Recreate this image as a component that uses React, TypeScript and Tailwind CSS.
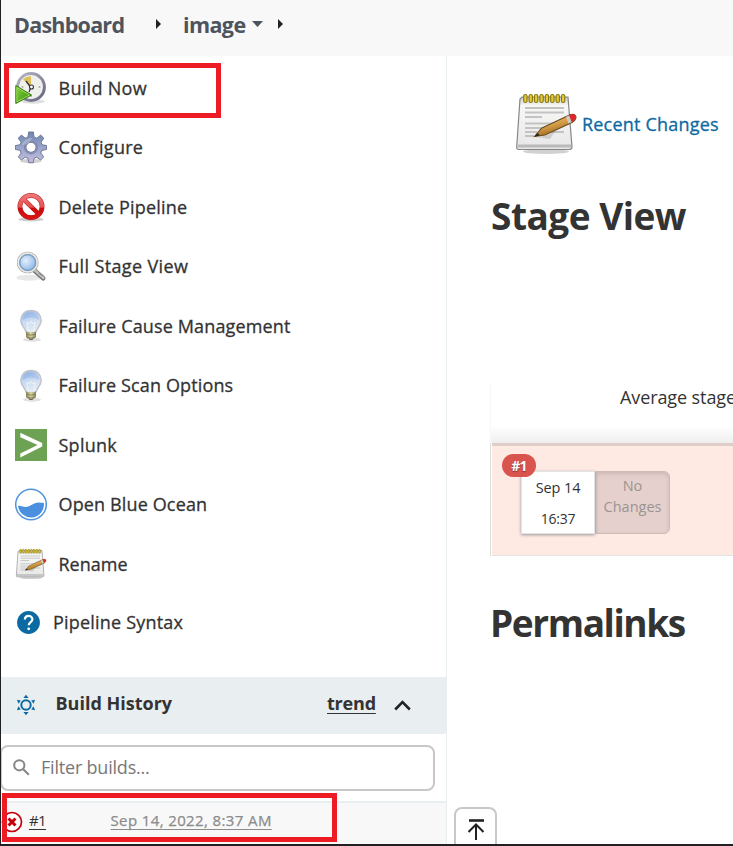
import React from "react";

function BuildNowIcon() {
  return (
    <svg width="32" height="34" viewBox="0 0 32 34">
      <defs>
        <linearGradient id="clockRim" x1="0" y1="0" x2="1" y2="1"><stop stopColor="#b9bac6" /><stop offset="1" stopColor="#62637f" /></linearGradient>
        <linearGradient id="play" x1="0" y1="0" x2="1" y2="1"><stop stopColor="#8ad63c" /><stop offset="1" stopColor="#2f8a08" /></linearGradient>
      </defs>
      <ellipse cx="18" cy="30.5" rx="12" ry="2.2" fill="#000" opacity=".13" />
      <circle cx="16" cy="16" r="13.4" fill="#efefec" stroke="url(#clockRim)" strokeWidth="3" />
      <path d="M16 16 L8 8.5 A11 11 0 0 1 16 5.2Z" fill="#dfbf57" />
      <path d="M15.5 16 L11 10 M16 16 L14 21" stroke="#333" strokeWidth="1.3" />
      <circle cx="16.5" cy="16" r="2" fill="#fff" stroke="#333" strokeWidth="1.1" />
      <g fill="#aaa"><circle cx="24.5" cy="16" r="1" /><circle cx="16" cy="25" r="1" /><circle cx="7.5" cy="16" r="1" /></g>
      <path d="M.8 14.5 L16.5 24 L.8 32.5Z" fill="url(#play)" stroke="#36770f" strokeWidth="1" />
      <path d="M1.9 16.4 L14.5 24 L1.9 30.8Z" fill="none" stroke="#a8e070" strokeWidth=".8" />
    </svg>
  );
}

function GearIcon() {
  return (
    <svg width="32" height="33" viewBox="0 0 32 33">
      <defs><linearGradient id="gear" x1="0" y1="0" x2="0" y2="1"><stop stopColor="#6d86b0" /><stop offset=".5" stopColor="#9aa4cb" /><stop offset="1" stopColor="#c5bfdf" /></linearGradient></defs>
      <ellipse cx="16" cy="30" rx="11" ry="2.2" fill="#000" opacity=".18" />
      <g fill="url(#gear)" stroke="#65708f" strokeWidth=".9" strokeLinejoin="round">
        <path fillRule="evenodd" d="M13.6 1 h4.8 l.6 5 l2.8 1.2 l3.9 -3.1 l3.1 3.1 l-2.8 4 l1 2.6 l4.6 .7 v4 l-4.6 .8 l-1.2 2.8 l2.9 3.8 l-3.1 3.1 l-3.9 -2.8 l-2.7 1.1 l-.7 4.4 h-4.5 l-.8 -4.4 l-2.7 -1.1 l-3.9 2.8 l-3.1 -3.1 l2.8 -3.8 l-1.1 -2.8 l-4.6 -.8 v-4 l4.6 -.7 l1.1 -2.6 l-2.8 -4 l3.1 -3.1 l3.9 3.1 l2.7 -1.2z M16 11.3 a5 5 0 1 0 0 10 a5 5 0 1 0 0 -10z" />
      </g>
      <circle cx="16" cy="16.3" r="6.4" fill="none" stroke="#8189ae" strokeWidth="1.4" />
      <path d="M6.8 14 Q10 6.5 17 7 Q15 14 6.8 14Z" fill="#fff" opacity=".25" />
    </svg>
  );
}

function ForbiddenIcon() {
  return (
    <svg width="32" height="32" viewBox="0 0 32 32">
      <defs><linearGradient id="stop" gradientUnits="userSpaceOnUse" x1="0" y1="3" x2="0" y2="29"><stop stopColor="#ee7b7b" /><stop offset=".5" stopColor="#e65050" /><stop offset=".56" stopColor="#cf0808" /><stop offset="1" stopColor="#dc1616" /></linearGradient></defs>
      <ellipse cx="16" cy="28.4" rx="12.5" ry="2" fill="#000" opacity=".2" />
      <circle cx="16" cy="15.5" r="11.1" fill="none" stroke="#b51b1b" strokeWidth="4.8" />
      <path d="M8.2 7.8 L23.8 23.2" stroke="#b51b1b" strokeWidth="4.5" />
      <circle cx="16" cy="15.5" r="11.1" fill="none" stroke="url(#stop)" strokeWidth="3.8" />
      <path d="M8.2 7.8 L23.8 23.2" stroke="url(#stop)" strokeWidth="3.5" />
    </svg>
  );
}

function MagnifierIcon() {
  return (
    <svg width="32" height="32" viewBox="0 0 32 32">
      <defs><radialGradient id="lens" cx=".4" cy=".4"><stop stopColor="#e2effc" /><stop offset="1" stopColor="#9abfeb" /></radialGradient></defs>
      <ellipse cx="14" cy="26.7" rx="12.5" ry="3" fill="#000" opacity=".09" />
      <path d="M19.5 19.5 L28.2 27.3" stroke="#747474" strokeWidth="4.6" strokeLinecap="round" />
      <path d="M19.5 19 L28.4 27" stroke="#c0c0bd" strokeWidth="2.4" strokeLinecap="round" />
      <path d="M24 21.7 L27.8 25" stroke="#888" strokeWidth="1.3" />
      <circle cx="12.7" cy="11.5" r="9.4" fill="url(#lens)" stroke="#a8aaa8" strokeWidth="2.8" />
      <circle cx="12.7" cy="11.5" r="9.5" fill="none" stroke="#eeeeec" strokeWidth="1.4" />
      <circle cx="12.7" cy="11.5" r="7.7" fill="none" stroke="#6d97c8" strokeWidth="1" />
    </svg>
  );
}

function BulbIcon() {
  return (
    <svg width="32" height="34" viewBox="0 0 32 34">
      <defs>
        <linearGradient id="bulb" x1="0" y1="0" x2=".35" y2="1"><stop stopColor="#8baee0" /><stop offset=".45" stopColor="#c5d8f2" /><stop offset="1" stopColor="#e5ebf2" /></linearGradient>
        <linearGradient id="base" x1="0" y1="0" x2="1" y2="0"><stop stopColor="#8b8857" /><stop offset=".5" stopColor="#dcdaa5" /><stop offset="1" stopColor="#84815a" /></linearGradient>
      </defs>
      <ellipse cx="17" cy="30.7" rx="9" ry="2" fill="#000" opacity=".12" />
      <path d="M16 1.5 C9.5 1.5 5.8 6 5.8 11.5 C5.8 16 9.6 18.3 11 23 Q16 25 21 23 C22.4 18.3 26.2 16 26.2 11.5 C26.2 6 22.5 1.5 16 1.5Z" fill="url(#bulb)" stroke="#c1c4c9" strokeWidth="1.5" />
      <path d="M16 3.3 C11 3.3 7.8 6.6 7.8 11 Q16 6.5 24.2 11 C24.2 6.6 21 3.3 16 3.3Z" fill="#82a7df" opacity=".35" />
      <path d="M13.3 22.5 L12 13 L14.5 15 L16 12 L18 15 L20 13 L18.7 22.5" fill="none" stroke="#f6f8fa" strokeWidth="1" opacity=".75" />
      <path d="M11 22.5 Q16 24.5 21 22.5 V27.5 Q19.5 30.5 16 30.5 Q12.5 30.5 11 27.5Z" fill="url(#base)" />
      <path d="M11 25.3 Q16 27 21 25.3 M11.3 28 Q16 29.8 20.7 28" fill="none" stroke="#77744b" strokeWidth=".8" />
      <path d="M13.5 29 Q16 30.5 18.5 29 L17.5 31 H14.5Z" fill="#68685a" />
    </svg>
  );
}

function SplunkIcon() {
  return (
    <svg width="32" height="32" viewBox="0 0 32 32">
      <path fill="#6da153" d="M0 0H32V32H0Z" />
      <path fill="#fff" d="M5.3 3.8 L27.2 14.1 V17.6 L5.3 28.5 V24.5 L22.6 16 L5.3 8.2Z" />
    </svg>
  );
}

function OceanIcon() {
  return (
    <svg width="32" height="33" viewBox="0 0 32 33">
      <circle cx="16" cy="16.5" r="15.3" fill="#fff" stroke="#4d94df" strokeWidth="1.5" />
      <path d="M3 17.8 C7 17 9 20.3 14 18.3 C20 14.5 22.5 13.6 28.9 15.1 A13 13 0 0 1 3 17.8Z" fill="#4a90df" />
    </svg>
  );
}

function NotepadIcon({ size = 32 }: { size?: number }) {
  return (
    <svg width={size} height={size} viewBox="0 0 64 64">
      <defs>
        <linearGradient id="paper" x1="0" y1="0" x2="0" y2="1"><stop stopColor="#c7c7c7" /><stop offset=".16" stopColor="#f7f7f6" /><stop offset="1" stopColor="#e7e7e7" /></linearGradient>
        <linearGradient id="pencil" x1="0" y1="0" x2=".5" y2="1"><stop stopColor="#f2cb79" /><stop offset=".55" stopColor="#d69f4a" /><stop offset="1" stopColor="#8f5d14" /></linearGradient>
      </defs>
      <ellipse cx="32" cy="59.5" rx="23" ry="2.5" fill="#000" opacity=".18" />
      <path d="M8 5 H54 L58 55 Q58 57.5 55 57.5 H5 Q2.5 57.5 2.7 55 L6 7Z" fill="url(#paper)" stroke="#868686" strokeWidth="1.2" />
      <path d="M4 52.5 H57 V55.5 H4Z" fill="#b9bab9" />
      <g stroke="#c3c3c3" strokeWidth="1.8"><path d="M11 16H50M11 20.5H50M11 25H28M11 31.5H44M11 36H37M11 40H23M34 40H50M11 44H20" /></g>
      <g fill="#e5cc31" stroke="#887612" strokeWidth="1.1">
        <rect x="9.7" y="2.5" width="3.3" height="8" rx="1.6" /><rect x="15.1" y="2.5" width="3.3" height="8" rx="1.6" /><rect x="20.5" y="2.5" width="3.3" height="8" rx="1.6" /><rect x="25.9" y="2.5" width="3.3" height="8" rx="1.6" /><rect x="31.3" y="2.5" width="3.3" height="8" rx="1.6" /><rect x="36.7" y="2.5" width="3.3" height="8" rx="1.6" /><rect x="42.1" y="2.5" width="3.3" height="8" rx="1.6" /><rect x="47.5" y="2.5" width="3.3" height="8" rx="1.6" />
      </g>
      <path d="M21 45 Q34 45 42 38 L36 47Z" fill="#000" opacity=".13" />
      <path d="M20.5 44.5 L27.5 36.2 L56 22.8 Q61 21 62 25 Q62 28 58 30.5 L31 43Z" fill="url(#pencil)" stroke="#6a4c20" strokeWidth="1.1" />
      <path d="M55 23.4 L57 22.4 Q61 21.2 61.7 25 Q61.5 28 57.5 30.2Z" fill="#df282d" />
      <path d="M52 24.8 L55 23.4 L57.5 30.2 L54.5 31.6Z" fill="#ccc" />
      <path d="M20.5 44.5 L23.5 41 L26 43.6Z" fill="#282719" />
    </svg>
  );
}

function SunIcon() {
  return (
    <svg width="20" height="22" viewBox="0 0 20 22" fill="#0b6aa2">
      <circle cx="10" cy="11" r="4.7" fill="none" stroke="#0b6aa2" strokeWidth="2" />
      <path d="M10 .8 L12.6 3.9H7.4Z M10 21.2 L12.6 18.1H7.4Z M.9 5.8 L4.8 6.4 L2.5 9.8Z M19.1 5.8 L15.2 6.4 L17.5 9.8Z M.9 16.2 L4.8 15.6 L2.5 12.2Z M19.1 16.2 L15.2 15.6 L17.5 12.2Z" />
    </svg>
  );
}

const tasks = [
  { label: "Build Now", icon: <BuildNowIcon />, tracking: "tracking-[0.3px]" },
  { label: "Configure", icon: <GearIcon />, tracking: "tracking-[0.3px]" },
  { label: "Delete Pipeline", icon: <ForbiddenIcon />, tracking: "tracking-[0.2px]" },
  { label: "Full Stage View", icon: <MagnifierIcon />, tracking: "tracking-[0.37px]" },
  { label: "Failure Cause Management", icon: <BulbIcon />, tracking: "tracking-[0.14px]" },
  { label: "Failure Scan Options", icon: <BulbIcon />, tracking: "tracking-[0.13px]" },
  { label: "Splunk", icon: <SplunkIcon />, tracking: "tracking-[0.25px]" },
  { label: "Open Blue Ocean", icon: <OceanIcon />, tracking: "tracking-[0.14px]" },
  { label: "Rename", icon: <NotepadIcon />, tracking: "tracking-normal" },
];

function Header() {
  return (
    <header className="flex h-14 shrink-0 items-center bg-[#f8f8f8] pb-1.5 pl-[13px] text-[21.5px] font-bold text-[#4d545d]">
      <span className="w-[142px] tracking-[-0.75px]">Dashboard</span>
      <svg className="mb-0.5" width="5" height="10" viewBox="0 0 5 10"><path d="M0 0 L5 5 L0 10Z" fill="#222" /></svg>
      <span className="ml-[22px] w-[69px] tracking-[-0.6px]">image</span>
      <svg className="mb-0.5" width="11" height="6" viewBox="0 0 11 6"><path d="M0 0H11L5.5 6Z" fill="#4d545d" /></svg>
      <svg className="mb-0.5 ml-[15px]" width="5" height="10" viewBox="0 0 5 10"><path d="M0 0 L5 5 L0 10Z" fill="#222" /></svg>
    </header>
  );
}

function Sidebar() {
  return (
    <aside className="flex w-[446px] shrink-0 flex-col border-r border-[#e9eef1]">
      <nav className="flex h-[621px] shrink-0 flex-col pt-[2.5px] text-[18px] font-medium [-webkit-text-stroke:0.3px]">
        {tasks.map((t) => (
          <a key={t.label} className="flex h-[59.5px] shrink-0 items-center pl-[14px]">
            <span className="flex w-[43.5px] shrink-0">{t.icon}</span>
            <span className={t.tracking}>{t.label}</span>
          </a>
        ))}
        <a className="flex h-[57px] items-center pl-4">
          <svg width="23" height="23" viewBox="0 0 23 23"><circle cx="11.5" cy="11.5" r="11.4" fill="#0b6aa2" /><path d="M7.9 8.6 C7.9 3.7 15.4 3.9 15.4 8.2 C15.4 11.2 11.7 11 11.7 14.3" fill="none" stroke="#fff" strokeWidth="2.2" /><circle cx="11.7" cy="17.8" r="1.4" fill="#fff" /></svg>
          <span className="ml-[13px] tracking-[0.2px]">Pipeline Syntax</span>
        </a>
      </nav>
      <div className="flex h-[57px] shrink-0 items-center bg-[#e9eef1] pb-1 pl-[15px] text-[18px] font-bold">
        <span className="mt-[3px] w-[39.5px]"><SunIcon /></span>
        <span className="w-[271.5px]">Build History</span>
        <span className="w-[67px] tracking-[-0.2px] underline decoration-1 underline-offset-[3px]">trend</span>
        <svg className="mt-1" width="17" height="11" viewBox="0 0 17 11"><path d="M1.2 9.5 L8.5 2.2 L15.8 9.5" fill="none" stroke="#222" strokeWidth="2.6" /></svg>
      </div>
      <div className="mt-[11px] -ml-px flex h-[46px] w-[435px] shrink-0 items-center rounded-lg border-2 border-[#c8c8c8] pb-0.5 pl-[11px] text-[18px] text-[#777]">
        <svg width="17" height="17" viewBox="0 0 17 17" fill="none" stroke="#858585" strokeWidth="2"><circle cx="6.3" cy="6.3" r="5.1" /><path d="M10 10 L15.8 15.8" /></svg>
        <span className="ml-[11px] tracking-[-0.2px]">Filter builds...</span>
      </div>
      <div className="mt-[10px] flex flex-1 items-center border-t-2 border-[#e9eef1] bg-[#f8f8f8] pb-1.5 text-[15px]">
        <svg className="mt-[3px]" width="22" height="22" viewBox="0 0 22 22"><circle cx="11" cy="11" r="9.5" fill="#fff" stroke="#c4000a" strokeWidth="1.7" /><path d="M7.5 7.5 L14.5 14.5 M14.5 7.5 L7.5 14.5" stroke="#c4000a" strokeWidth="3" /></svg>
        <span className="ml-[6px] w-[81.5px] tracking-[-0.6px] underline decoration-1 underline-offset-[3px]">#1</span>
        <span className="font-medium tracking-[0.38px] text-[#8b8b8b] underline decoration-1 underline-offset-[3px] [-webkit-text-stroke:0.25px]">Sep 14, 2022, 8:37 AM</span>
      </div>
    </aside>
  );
}

function MainPanel() {
  return (
    <main className="flex min-w-0 flex-1 flex-col overflow-hidden">
      <div className="mt-[36px] ml-[67px] flex h-16 shrink-0 items-center">
        <NotepadIcon size={64} />
        <span className="ml-[4px] whitespace-nowrap text-[18px] font-medium tracking-[0.2px] text-[#0b6aa2] [-webkit-text-stroke:0.3px]">Recent Changes</span>
      </div>
      <h1 className="mt-[34px] ml-[44px] h-[52px] shrink-0 whitespace-nowrap text-[37px] leading-[52px] font-bold tracking-[-0.5px]">Stage View</h1>
      <section className="mt-[141px] ml-[43px] h-[173px] shrink-0 overflow-hidden">
        <div className="flex h-[60px] flex-col border-l border-[#f7f7f7] text-[18px]">
          <span className="ml-[129px] whitespace-nowrap leading-7 tracking-[-0.1px]">Average stage times:</span>
          <div className="mt-auto h-[17px] bg-linear-to-b from-white to-[#eeeeee]" />
        </div>
        <div className="flex h-[113px] border-l border-[#d9dde0] pl-px">
          <div className="relative flex-1 border-t-3 border-b border-[#dfcdca] border-b-[#e4e4e4] bg-[#ffe9e3] pt-[25px] pl-[29px]">
            <div className="flex h-[63px]">
              <div className="z-10 flex w-[74px] flex-col items-center bg-white text-[15px] leading-[30px] shadow-[0_1px_3px_#999999] outline outline-[#e1e3e4] -outline-offset-1">
                <span className="h-[31px] text-[14.5px] leading-[33px] tracking-[-0.1px]">Sep 14</span>
                <span className="text-[14px] leading-[33px] tracking-[-0.2px]">16:37</span>
              </div>
              <div className="w-[75px] rounded-r-md border border-[#cfbbb8] bg-[#e5d0cd] pt-[3px] text-center text-[14.5px] leading-[21px] text-[#9b9491] shadow-[inset_0_2px_4px_#cbb8b5]">No<br />Changes</div>
            </div>
            <span className="absolute top-[8px] left-[10px] z-20 flex h-[23px] w-[34px] items-center justify-center rounded-full bg-[#d9534f] text-[14px] font-bold tracking-[-0.8px] text-white [text-shadow:0_1px_1px_#773333]">#1</span>
          </div>
        </div>
      </section>
      <h1 className="mt-[41px] ml-[43px] h-[52px] shrink-0 whitespace-nowrap text-[37px] leading-[52px] font-bold tracking-[-1.4px]">Permalinks</h1>
      <div className="mt-auto ml-[7px] flex h-[37px] w-[43px] shrink-0 justify-center rounded-t-lg border-2 border-b-0 border-[#c8c8c8] pt-[10px]">
        <svg width="18" height="22" viewBox="0 0 18 22" fill="none" stroke="#222"><path d="M2 1.5H17" strokeWidth="2.6" /><path d="M9 21V6M1.5 13L9 5.5L16.5 13" strokeWidth="2" /></svg>
      </div>
    </main>
  );
}

export default function App() {
  return (
    <div className="relative flex h-[846px] w-[733px] flex-col overflow-hidden border-b-2 border-l border-[#202024] bg-white text-[#333] [font-family:'Open_Sans','Noto_Sans',sans-serif]">
      <Header />
      <div className="flex min-h-0 flex-1">
        <Sidebar />
        <MainPanel />
      </div>
      <div className="absolute top-[63px] left-[3px] z-30 h-[55px] w-[217px] border-5 border-[#ed1c24]" />
      <div className="absolute top-[793px] left-px z-30 h-[49px] w-[335px] border-5 border-[#ed1c24]" />
    </div>
  );
}
